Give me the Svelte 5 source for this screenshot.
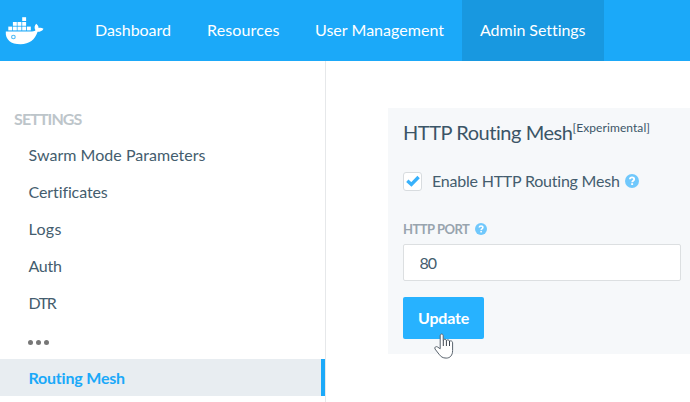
<script>
  const tabs = [
    { label: 'Dashboard', width: 112, spacing: -0.03 },
    { label: 'Resources', width: 108, spacing: 0.15 },
    { label: 'User Management', width: 165, spacing: 0.03 },
    { label: 'Admin Settings', width: 142, spacing: -0.05, active: true },
  ];
  const links = [
    { label: 'Swarm Mode Parameters', spacing: 0.03 },
    { label: 'Certificates', spacing: -0.1 },
    { label: 'Logs', spacing: 0.3 },
    { label: 'Auth', spacing: -0.3 },
    { label: 'DTR', spacing: -1.4 },
    { label: '...', spacing: 0 },
    { label: 'Routing Mesh', spacing: -0.2 },
  ];
  let enabled = $state(true);
  let port = $state('80');
</script>

{#snippet help(size)}
  <svg class="help" width={size} height={size} viewBox="0 0 14 14" aria-label="Help">
    <circle cx="7" cy="7" r="7" fill="#70c8fc" />
    <path d="M4.9 5.3C5 3.9 5.9 3.4 7 3.4c1.2 0 2.2.7 2.2 1.9 0 1.5-2 1.5-2 2.9" fill="none" stroke="#fff" stroke-width="1.8" />
    <rect x="6.2" y="9.2" width="1.9" height="1.8" fill="#fff" />
  </svg>
{/snippet}

<div class="app">
  <header>
    <svg class="logo" width="40" height="30" viewBox="0 0 40 30" aria-label="Docker">
      <g fill="#fff">
        <rect x="17.2" y="1.2" width="3.9" height="3.8" />
        <rect x="7.9" y="6" width="3.9" height="3.8" />
        <rect x="12.5" y="6" width="3.9" height="3.8" />
        <rect x="17.2" y="6" width="3.9" height="3.8" />
        <rect x="3.3" y="10.6" width="3.9" height="3.8" />
        <rect x="7.9" y="10.6" width="3.9" height="3.8" />
        <rect x="12.5" y="10.6" width="3.9" height="3.8" />
        <rect x="17.2" y="10.6" width="3.9" height="3.8" />
        <rect x="21.9" y="10.6" width="3.9" height="3.8" />
        <path d="M.8 15.4H27c2 0 3.1-.5 3.4-1.2-1.3-2.3-1-4.7.8-6.5 1.6 1.1 2.4 2.6 2.4 4.2 1.6-.5 3.4-.2 4.9.8-1.1 2.2-3.1 3.1-5.9 3.1C30 23.7 24.4 28.2 15.6 28.2 5.7 28.2.2 23.5.8 15.4Z" />
      </g>
      <circle cx="8.4" cy="21" r="1.8" fill="#fff" stroke="#4dbaf5" stroke-width="1.1" />
    </svg>
    <nav>
      {#each tabs as tab}
        <a class="tab" class:active={tab.active} style="width:{tab.width}px;letter-spacing:{tab.spacing}px">{tab.label}</a>
      {/each}
    </nav>
  </header>
  <div class="body">
    <aside>
      <h2>SETTINGS</h2>
      {#each links as link}
        {#if link.label === '...'}
          <div class="link dots"><i></i><i></i><i></i></div>
        {:else}
          <a class="link" class:current={link.label === 'Routing Mesh'} style="letter-spacing:{link.spacing}px">{link.label}</a>
        {/if}
      {/each}
    </aside>
    <main>
      <section>
        <h1><span>HTTP Routing Mesh</span><small>[Experimental]</small></h1>
        <label class="enable">
          <input type="checkbox" bind:checked={enabled} />
          <span class="box">
            {#if enabled}
              <svg width="14" height="12" viewBox="0 0 14 12"><path d="M1.3 5.7 5.4 9.5 12.6 2" fill="none" stroke="#38b1fb" stroke-width="3.3" /></svg>
            {/if}
          </span>
          <span class="enable-text">Enable HTTP Routing Mesh</span>
          {@render help(14)}
        </label>
        <div class="port-label"><span>HTTP PORT</span>{@render help(12)}</div>
        <input class="port" type="text" bind:value={port} />
        <button>
          <span>Update</span>
          <svg class="cursor" width="20" height="26" viewBox="0 0 20 26">
            <path d="M6.2 15.8V2.8C6.2.5 9.2.5 9.2 2.8V7.2C10.2 5.7 12.1 6 12.3 7.5 13.4 6.4 15.2 6.8 15.5 8.2 16.8 7.4 18.6 8.1 18.6 9.8V17.5C18.6 22.5 16 25.1 12.2 25.1 8.6 25.1 6.8 23.6 5 21.2L1 16C.1 14.3 2.1 12.9 3.6 14Z" fill="#fff" stroke="#59636d" stroke-width="1" />
            <path d="M9.3 7v6M12.4 7.4V13M15.5 8V13" stroke="#3f4650" stroke-width="1" />
          </svg>
        </button>
      </section>
    </main>
  </div>
</div>

<style>
  :global(body) { margin: 0; }
  .app {
    width: 690px;
    height: 402px;
    overflow: hidden;
    display: flex;
    flex-direction: column;
    background: #fff;
    color: #445d6e;
    font: 16px/20px Lato, "Open Sans", sans-serif;
    font-variant-ligatures: none;
  }
  .app * { box-sizing: border-box; }
  header { flex: 0 0 61px; display: flex; background: #1ba9f9; }
  .logo { margin: 16px 32px 0 5px; }
  nav { display: flex; }
  .tab { padding: 20px 0 0 18px; color: #fff; white-space: nowrap; }
  .active { background: #1898e0; }
  .body { flex: 1; display: flex; min-height: 0; }
  aside { flex: 0 0 326px; border-right: 1px solid #e6e8ea; padding-top: 48px; }
  h2 { margin: 0 0 8px 14px; font-size: 16px; line-height: 20px; font-weight: 700; color: #bdc5ca; letter-spacing: -0.9px; }
  .link { display: flex; align-items: center; height: 37px; padding: 0 0 2px 28.5px; }
  .current { padding-bottom: 0; background: #e8edf1; border-right: 4px solid #1ba9f9; color: #1ba9f9; font-weight: 700; }
  .dots { gap: 3px; padding: 3px 0 0 28px; }
  .dots i { width: 5px; height: 5px; border-radius: 50%; background: #777; }
  main { flex: 1; padding: 47px 0 0 62px; }
  section { height: 246px; background: #f6f8fa; padding: 11px 9px 0 15px; display: flex; flex-direction: column; align-items: flex-start; }
  h1 { display: flex; margin: 0; height: 26px; font-size: 20px; line-height: 26px; font-weight: 400; color: #3b5567; white-space: nowrap; letter-spacing: -0.45px; }
  small { font-size: 12px; line-height: 18px; letter-spacing: 0.08px; }
  .enable { display: flex; align-items: center; height: 20px; margin-top: 26px; white-space: nowrap; }
  .enable input { display: none; }
  .box { width: 19px; height: 19px; border: 1px solid #d8dcdf; border-radius: 3px; background: #fff; display: flex; align-items: center; justify-content: center; }
  .enable-text { width: 188px; margin: 0 5px 0 10px; letter-spacing: -0.22px; }
  .help { display: block; flex: none; }
  .port-label { display: flex; align-items: center; height: 16px; margin-top: 30px; font-size: 13px; line-height: 16px; font-weight: 700; color: #98a4ae; letter-spacing: -0.5px; }
  .port-label span { width: 72px; white-space: nowrap; }
  .port { width: 278px; height: 37px; margin-top: 7px; padding: 0 15.5px; border: 1px solid #dcdfe1; border-radius: 2px; background: #fff; color: #445d6e; font: inherit; letter-spacing: -1px; outline: none; }
  button { position: relative; width: 81px; height: 42px; margin-top: 16px; padding: 0 0 0 15px; border: 0; border-radius: 2px; background: #27b2ff; color: #fff; text-align: left; font: 700 16px/20px Lato, sans-serif; letter-spacing: -0.2px; }
  .cursor { position: absolute; left: 31px; top: 36px; }
</style>
